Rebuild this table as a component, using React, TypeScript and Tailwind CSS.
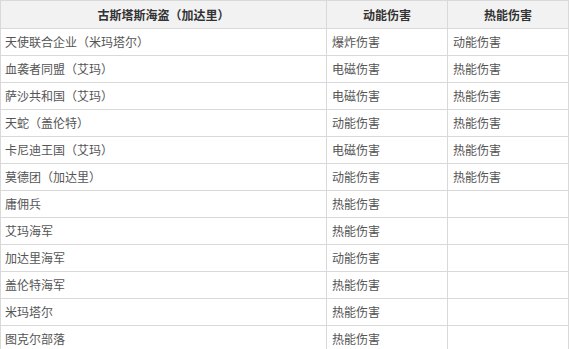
const rows: [string, string, string][] = [
  ['天使联合企业（米玛塔尔）', '爆炸伤害', '动能伤害'],
  ['血袭者同盟（艾玛）', '电磁伤害', '热能伤害'],
  ['萨沙共和国（艾玛）', '电磁伤害', '热能伤害'],
  ['天蛇（盖伦特）', '动能伤害', '热能伤害'],
  ['卡尼迪王国（艾玛）', '电磁伤害', '热能伤害'],
  ['莫德团（加达里）', '动能伤害', '热能伤害'],
  ['庸佣兵', '热能伤害', ''],
  ['艾玛海军', '热能伤害', ''],
  ['加达里海军', '动能伤害', ''],
  ['盖伦特海军', '热能伤害', ''],
  ['米玛塔尔', '热能伤害', ''],
  ['图克尔部落', '热能伤害', ''],
];

export default function App() {
  return (
    <div
      className="h-[349px] w-[569px] overflow-hidden bg-white"
      style={{ fontFamily: '"Microsoft YaHei", "Noto Sans CJK SC", sans-serif' }}
    >
      <table className="w-[568px] table-fixed border-collapse text-[12px] leading-none">
        <colgroup>
          <col className="w-[326px]" />
          <col className="w-[121px]" />
          <col className="w-[121px]" />
        </colgroup>
        <thead>
          <tr className="h-[28px] bg-[#f2f2f2]">
            <th className="border border-[#d9d9d9] font-bold text-[#333]">古斯塔斯海盗（加达里）</th>
            <th className="border border-[#d9d9d9] font-bold text-[#333]">动能伤害</th>
            <th className="border border-[#d9d9d9] font-bold text-[#333]">热能伤害</th>
          </tr>
        </thead>
        <tbody>
          {rows.map(([a, b, c]) => (
            <tr key={a} className="h-[27px]">
              <td className="border border-[#d9d9d9] pl-[4px] text-[#555]">{a}</td>
              <td className="border border-[#d9d9d9] pl-[5px] text-[#555]">{b}</td>
              <td className="border border-[#d9d9d9] pl-[5px] text-[#555]">{c}</td>
            </tr>
          ))}
        </tbody>
      </table>
    </div>
  );
}
